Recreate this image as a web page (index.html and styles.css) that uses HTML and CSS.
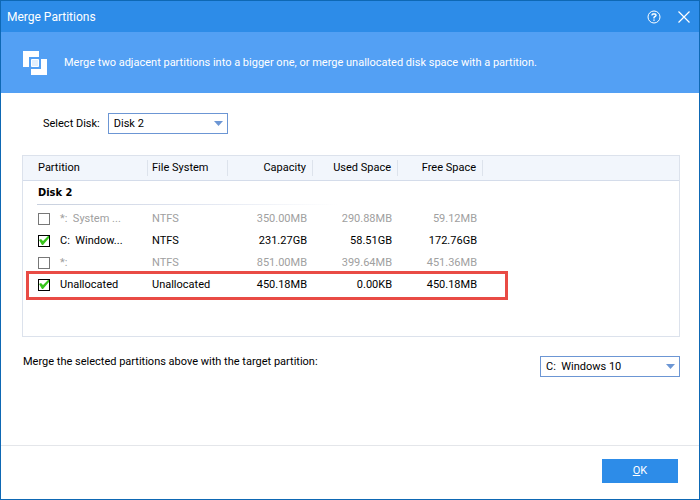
FILE: index.html
```html
<!DOCTYPE html>
<html lang="en">
    <head>
        <meta charset="utf-8">
        <meta name="viewport" content="width=device-width, initial-scale=1.0">
        <title>Merge Partitions</title>
        <link rel="stylesheet" href="styles.css">
    </head>
    <body>
        <div class="window">
            <header class="titleBar">
                <h1>Merge Partitions</h1>
                <button class="iconBtn" type="button" aria-label="Help">
                    <svg width="14" height="14" viewBox="0 0 14 14" fill="none" stroke="#fff">
                        <circle cx="7" cy="7" r="6"/>
                        <path d="M5 5.6V5q0-1 1-1h2q1 0 1 1v.6L7 7.4v1.1" stroke-width="1.3"/>
                        <path d="M7 9.4v1.4" stroke-width="1.4"/>
                    </svg>
                </button>
                <button class="iconBtn" type="button" aria-label="Close">
                    <svg width="12" height="12" viewBox="0 0 12 12" fill="none" stroke="#fff" stroke-width="1.2">
                        <path d="M.5.5l11 11M11.5.5l-11 11"/>
                    </svg>
                </button>
            </header>
            <div class="banner">
                <svg class="mergeIcon" width="24" height="24" viewBox="0 0 24 24" fill="#fff">
                    <path d="M0 0h16v6H6v10H0z"/>
                    <path d="M18 8h6v16H8v-6h10z"/>
                    <path d="M8.500 8.500h7v7h-7z" fill="#e2effd" stroke="#fff"/>
                </svg>
                <p>Merge two adjacent partitions into a bigger one, or merge unallocated disk space with a partition.</p>
            </div>
            <main class="content">
                <div class="diskRow">
                    <label for="disk">Select Disk:</label>
                    <select id="disk" class="diskSelect">
                        <option>Disk 2</option>
                    </select>
                </div>
                <div class="listBox">
                    <table class="partitions">
                        <colgroup>
                            <col class="colName">
                            <col class="colSystem">
                            <col class="colSize">
                            <col class="colSize">
                            <col class="colSize">
                            <col>
                        </colgroup>
                        <thead>
                            <tr>
                                <th><span>Partition</span></th>
                                <th><span>File System</span></th>
                                <th class="num"><span>Capacity</span></th>
                                <th class="num"><span>Used Space</span></th>
                                <th class="num"><span>Free Space</span></th>
                                <td></td>
                            </tr>
                        </thead>
                        <tbody>
                            <tr>
                                <th class="group" colspan="6"><div>Disk 2</div></th>
                            </tr>
                            <tr class="disabled">
                                <td><label><input type="checkbox" disabled>*:&nbsp; System ...</label></td>
                                <td>NTFS</td>
                                <td class="num">350.00MB</td>
                                <td class="num">290.88MB</td>
                                <td class="num">59.12MB</td>
                                <td></td>
                            </tr>
                            <tr>
                                <td><label><input type="checkbox" checked>C:&nbsp; Window...</label></td>
                                <td>NTFS</td>
                                <td class="num">231.27GB</td>
                                <td class="num">58.51GB</td>
                                <td class="num">172.76GB</td>
                                <td></td>
                            </tr>
                            <tr class="disabled">
                                <td><label><input type="checkbox" disabled>*:</label></td>
                                <td>NTFS</td>
                                <td class="num">851.00MB</td>
                                <td class="num">399.64MB</td>
                                <td class="num">451.36MB</td>
                                <td></td>
                            </tr>
                            <tr class="marked">
                                <td><label><input type="checkbox" checked>Unallocated</label></td>
                                <td>Unallocated</td>
                                <td class="num">450.18MB</td>
                                <td class="num">0.00KB</td>
                                <td class="num">450.18MB</td>
                                <td></td>
                            </tr>
                        </tbody>
                    </table>
                </div>
                <div class="targetRow">
                    <label for="target">Merge the selected partitions above with the target partition:</label>
                    <select id="target" class="targetSelect">
                        <option>C:&nbsp; Windows 10</option>
                    </select>
                </div>
            </main>
            <footer class="footer">
                <button class="okBtn" type="button"><u>O</u>K</button>
            </footer>
        </div>
    </body>
</html>
```

FILE: styles.css
```css
* {
    box-sizing: border-box;
}
body {
    margin: 0;
    font-family: Tahoma, Roboto, sans-serif;
    font-size: 11px;
    line-height: 14px;
    color: #000;
}
h1, p {
    margin: 0;
}
button, select, input {
    margin: 0;
    font: inherit;
}
.window {
    display: flex;
    flex-direction: column;
    min-height: 100vh;
    border: 1px solid #0e68b4;
    background: #fff;
}

/* title bar and banner */
.titleBar {
    display: flex;
    align-items: center;
    gap: 12px;
    height: 31px;
    padding: 0 6px;
    background: #2d8ce8;
    color: #fff;
}
.titleBar h1 {
    flex: 1;
    font-size: 12px;
    font-weight: normal;
}
.iconBtn {
    display: flex;
    align-items: center;
    justify-content: center;
    width: 18px;
    height: 18px;
    padding: 0;
    border: 0;
    background: none;
}
.banner {
    display: flex;
    align-items: center;
    gap: 17px;
    min-height: 61px;
    padding: 0 22px;
    background: #53a0f4;
    color: #fff;
}

/* body */
.content {
    flex: 1;
    padding: 20px 19px 20px 21px;
}
select {
    appearance: none;
    height: 21px;
    padding: 1px 16px 0 5px;
    border: 1px solid #6c96d4;
    border-radius: 0;
    color: #000;
    background: #fff url("data:image/svg+xml,%3Csvg xmlns='http://www.w3.org/2000/svg' width='9' height='5'%3E%3Cpath d='M0 0h9L4.500 5z' fill='%236c96d4'/%3E%3C/svg%3E") no-repeat right 4px center;
}
.diskRow {
    display: flex;
    align-items: center;
    gap: 8px;
    padding-left: 21px;
}
.diskSelect {
    width: 120px;
}
.listBox {
    min-height: 182px;
    margin-top: 21px;
    border: 1px solid #dce2ec;
}
.partitions {
    width: 100%;
    table-layout: fixed;
    border-collapse: separate;
    border-spacing: 0;
}
.colName {
    width: 125px;
}
.colSystem {
    width: 80px;
}
.colSize {
    width: 85px;
}
.partitions th {
    font-weight: normal;
    text-align: left;
}
.partitions th, .partitions td {
    padding: 0 0 0 4px;
    white-space: nowrap;
}
.partitions th:first-child, .partitions td:first-child {
    padding-left: 15px;
}
.partitions .num {
    padding: 0 6px 0 0;
    text-align: right;
}
.partitions thead th, .partitions thead td {
    height: 25px;
    background: #f2f6fc;
    border-bottom: 1px solid #d4dcea;
}
.partitions thead .num {
    padding-right: 0;
}
.partitions thead span {
    display: block;
    line-height: 16px;
    border-right: 1px solid #dde3ec;
}
.partitions thead .num span {
    padding-right: 6px;
}
.partitions tbody td {
    height: 22px;
}
.partitions tbody th.group {
    padding: 0 0 3px 14px;
}
.group div {
    width: 300px;
    padding-left: 1px;
    font-family: Tahoma, "DejaVu Sans Condensed", sans-serif;
    font-weight: bold;
    line-height: 23px;
    border-bottom: 1px solid;
    border-image: linear-gradient(to right, #c8d0de, #dfe4f0 50%, #fff) 1;
}
.partitions label {
    display: flex;
    align-items: center;
    gap: 10px;
}
input[type="checkbox"] {
    appearance: none;
    width: 12px;
    height: 12px;
    border: 1px solid #000;
    background: #fff;
}
input[type="checkbox"]:checked {
    background: #fff url("data:image/svg+xml,%3Csvg xmlns='http://www.w3.org/2000/svg' width='10' height='10'%3E%3Cpath d='M0 4l2-1 2 2 5-5h1v2L4 9H3z' fill='%2338c41c'/%3E%3C/svg%3E") no-repeat center;
}
input[type="checkbox"]:disabled {
    border-color: #777;
}
.disabled {
    color: #a0a0a0;
}
.marked {
    position: relative;
}
/* red frame laid over the row */
.marked td:first-child::after {
    content: "";
    position: absolute;
    top: -3px;
    left: 3px;
    box-sizing: border-box;
    width: 482px;
    height: 29px;
    border: 3px solid #e94b45;
    pointer-events: none;
}
.targetRow {
    display: flex;
    justify-content: space-between;
    align-items: center;
    margin-top: 18px;
    padding-left: 1px;
}
.targetRow label {
    padding-bottom: 8px;
}
.targetSelect {
    width: 140px;
}

/* bottom bar */
.footer {
    display: flex;
    justify-content: flex-end;
    padding: 13px 21px 16px;
    border-top: 1px solid #e4e6ea;
}
.okBtn {
    width: 76px;
    height: 24px;
    padding: 0;
    border: 0;
    background: #2d8ce8;
    color: #fff;
}
```
